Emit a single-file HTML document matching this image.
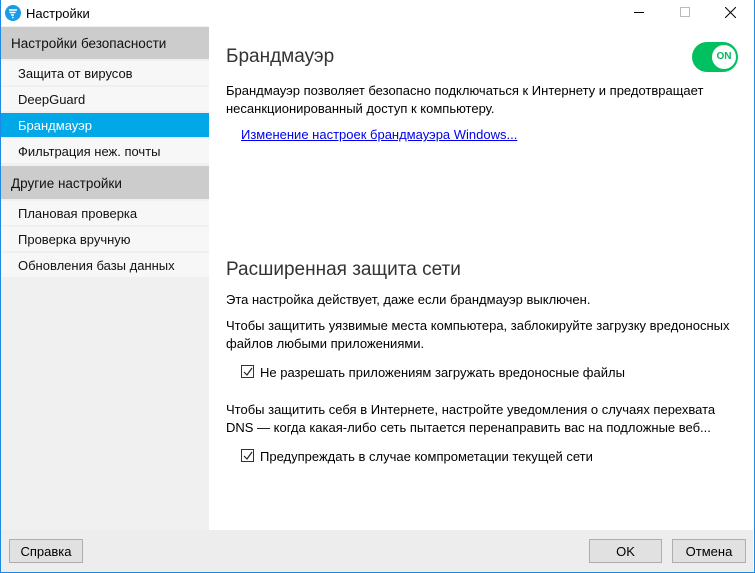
<!DOCTYPE html>
<html><head><meta charset="utf-8"><style>
*{margin:0;padding:0;box-sizing:border-box}
body{width:755px;height:573px;overflow:hidden;background:#fff;font-family:"Liberation Sans",sans-serif;font-size:13px;color:#000;position:relative}
.frame{position:absolute;left:0;top:0;width:755px;height:573px;border:1px solid #1e88e5;border-top:none}
.title{position:absolute;left:0;top:0;width:755px;height:26px;background:#fff}
.abs{position:absolute;white-space:nowrap}
.side{position:absolute;left:1px;top:26px;width:208px;height:504px;background:#f0f0f0}
.hdr{position:absolute;left:0;width:208px;background:#cccccc;font-size:13.5px;padding-left:10px;color:#111;padding-top:1px}
.it{position:absolute;left:0;width:208px;height:24px;background:#f7f7f7;padding-left:17px;line-height:26px;color:#111}
.sel{background:#00a8e8;color:#fff}
.main{position:absolute;left:209px;top:26px;width:544px;height:504px;background:#fff}
.h{font-size:19px;color:#333;font-weight:300}
.foot{position:absolute;left:1px;top:530px;width:752px;height:42px;background:#ededed}
.btn{position:absolute;top:539px;height:24px;background:#e1e1e1;border:1px solid #adadad;text-align:center;line-height:23px}
.cb{position:absolute;width:13px;height:13px;border:1px solid #333;background:#fff}
.m{position:absolute;white-space:nowrap}
</style></head><body>
<div class="title"></div>
<svg class="abs" style="left:5px;top:5px" width="16" height="16" viewBox="0 0 16 16"><circle cx="8" cy="8" r="8" fill="#1a9be8"/><path d="M4 5h8M4.5 7.5h6M6 10h3M7 12.5h1.5" stroke="#fff" stroke-width="1.6"/></svg>
<div class="abs" style="left:26px;top:6px;font-size:13px">Настройки</div>
<div class="abs" style="left:634px;top:12px;width:10px;height:1px;background:#000"></div>
<div class="abs" style="left:680px;top:7px;width:10px;height:10px;border:1px solid #bbb"></div>
<svg class="abs" style="left:725px;top:7px" width="11" height="11"><path d="M0 0L11 11M11 0L0 11" stroke="#000" stroke-width="1"/></svg>
<div class="side">
<div class="hdr" style="top:1px;height:32px;line-height:32px">Настройки безопасности</div>
<div class="it" style="top:35px">Защита от вирусов</div>
<div class="it" style="top:61px">DeepGuard</div>
<div class="it sel" style="top:87px">Брандмауэр</div>
<div class="it" style="top:113px">Фильтрация неж. почты</div>
<div class="hdr" style="top:140px;height:33px;line-height:33px">Другие настройки</div>
<div class="it" style="top:175px">Плановая проверка</div>
<div class="it" style="top:201px">Проверка вручную</div>
<div class="it" style="top:227px">Обновления базы данных</div>
</div>
<div class="main"></div>
<div class="abs h" style="left:226px;top:46px">Брандмауэр</div>
<div class="abs" style="left:692px;top:42px;width:46px;height:30px;border-radius:15px;background:#00c060"></div>
<div class="abs" style="left:712px;top:45px;width:24px;height:24px;border-radius:12px;background:#fff;color:#00b85a;font-size:10px;font-weight:bold;text-align:center;line-height:24px">ON</div>
<div class="m" style="left:226px;top:82px;line-height:18px">Брандмауэр позволяет безопасно подключаться к Интернету и предотвращает<br>несанкционированный доступ к компьютеру.</div>
<div class="m" style="left:241px;top:127px;color:#0000ee;text-decoration:underline">Изменение настроек брандмауэра Windows...</div>
<div class="abs h" style="left:226px;top:259px">Расширенная защита сети</div>
<div class="m" style="left:226px;top:292px">Эта настройка действует, даже если брандмауэр выключен.</div>
<div class="m" style="left:226px;top:317px;line-height:18px">Чтобы защитить уязвимые места компьютера, заблокируйте загрузку вредоносных<br>файлов любыми приложениями.</div>
<div class="cb" style="left:241px;top:365px"></div>
<svg class="abs" style="left:243px;top:367px" width="10" height="10"><path d="M1 5l3 3 5-7" stroke="#222" stroke-width="1.2" fill="none"/></svg>
<div class="m" style="left:260px;top:365px">Не разрешать приложениям загружать вредоносные файлы</div>
<div class="m" style="left:226px;top:401px;line-height:18px">Чтобы защитить себя в Интернете, настройте уведомления о случаях перехвата<br>DNS — когда какая-либо сеть пытается перенаправить вас на подложные веб...</div>
<div class="cb" style="left:241px;top:449px"></div>
<svg class="abs" style="left:243px;top:451px" width="10" height="10"><path d="M1 5l3 3 5-7" stroke="#222" stroke-width="1.2" fill="none"/></svg>
<div class="m" style="left:260px;top:449px">Предупреждать в случае компрометации текущей сети</div>
<div class="foot"></div>
<div class="btn" style="left:9px;width:74px">Справка</div>
<div class="btn" style="left:589px;width:73px">OK</div>
<div class="btn" style="left:672px;width:74px">Отмена</div>
<div class="frame"></div>
</body></html>
